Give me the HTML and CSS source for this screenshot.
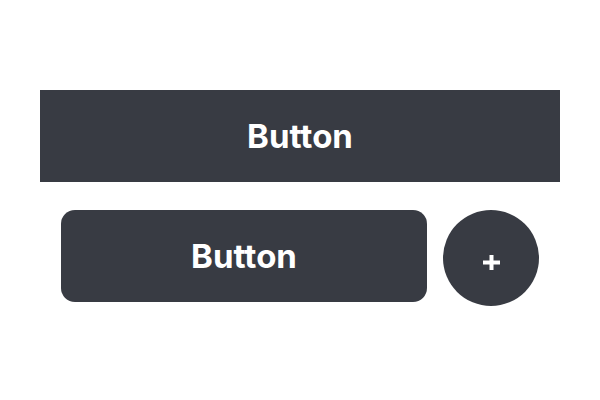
FILE: index.html
```html
<!DOCTYPE html>
<html lang="en">
<head>
    <meta charset="UTF-8">
    <meta name="viewport" content="width=device-width, initial-scale=1.0">
    <title>Buttons</title>
    <link rel="stylesheet" href="styles.css">
</head>
<body>
<div id="page">
    <button class="btn btn-block">Button</button>
    <div class="row">
        <button class="btn btn-round">Button</button>
        <button class="btn btn-circle" aria-label="Add">
            <svg width="17" height="15" viewBox="0 0 17 15"><path d="M8.5 0v15M0 7.5h17" stroke="#fff" stroke-width="4" fill="none"/></svg>
        </button>
    </div>
</div>
</body>
</html>
```

FILE: styles.css
```css
body {
    margin: 0;
    background: #fff;
    font-family: "Inter", "Noto Sans", sans-serif;
}
#page {
    width: 600px;
    height: 400px;
    padding-top: 90px;
    box-sizing: border-box;
    display: flex;
    flex-direction: column;
    align-items: center;
    gap: 28px;
}
.btn {
    border: none;
    margin: 0;
    padding: 0;
    background: #383b43;
    color: #fff;
    font-family: "Inter", "Noto Sans", sans-serif;
    font-weight: 700;
    font-size: 33px;
    display: flex;
    align-items: center;
    justify-content: center;
}
.btn-block {
    width: 520px;
    height: 92px;
}
.row {
    display: flex;
    align-items: flex-start;
    gap: 16px;
}
.btn-round {
    width: 366px;
    height: 92px;
    border-radius: 14px;
}
.btn-circle {
    width: 96px;
    height: 96px;
    border-radius: 50%;
    padding-top: 8px;
}
.btn-circle svg {
    display: block;
}
```
